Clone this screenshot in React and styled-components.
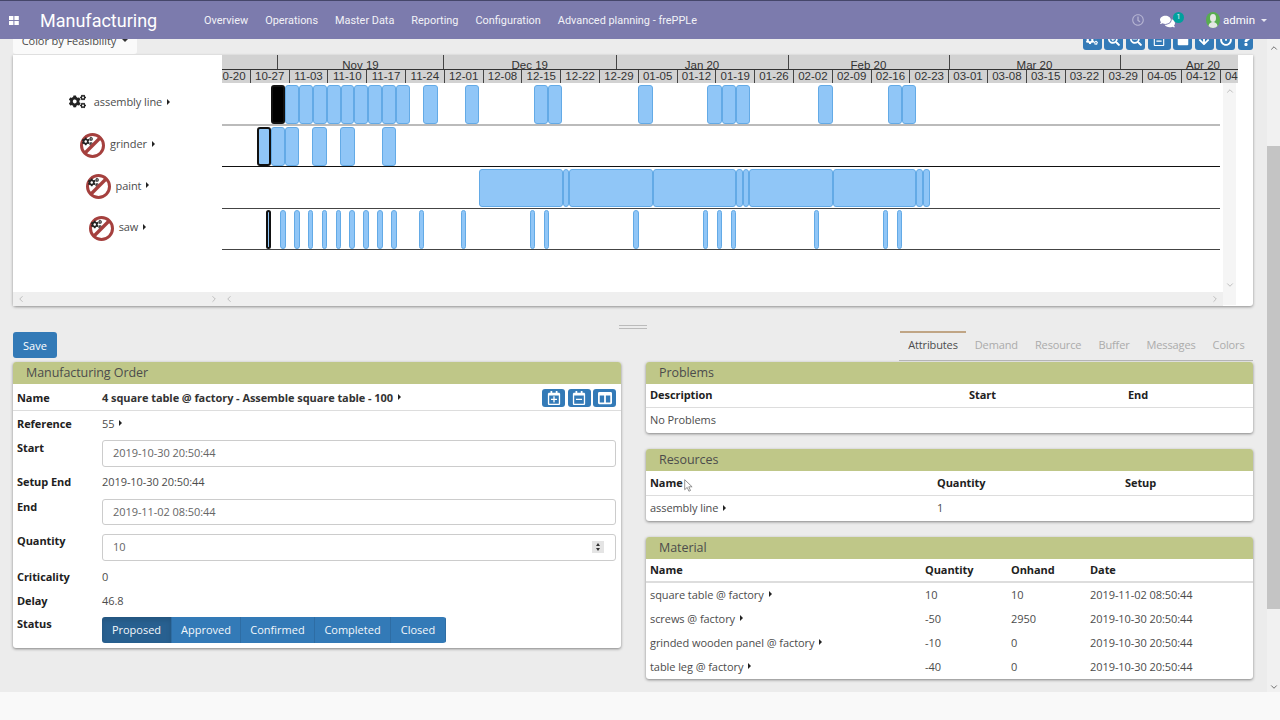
import React from 'react';
import styled, { createGlobalStyle } from 'styled-components';
import { ChevronUp, ChevronDown, ChevronLeft, ChevronRight } from 'lucide-react';
import {
  FaCogs, FaSearchPlus, FaSearchMinus, FaRegCalendarMinus, FaRegCalendarPlus, FaStop,
  FaArrowDown, FaPowerOff, FaQuestion, FaColumns, FaComments, FaRegClock,
} from 'react-icons/fa';

const GlobalStyle = createGlobalStyle`
  html, body { margin: 0; padding: 0; height: 100%; overflow: hidden; }
  body { font-family: "Open Sans", "Liberation Sans", sans-serif; font-size: 11px; letter-spacing: -0.07px; color: #4c4c4c; }
`;

const Page = styled.div`
  width: 1280px;
  height: 720px;
  display: flex;
  flex-direction: column;
  background: #f9f9f9;
`;

// top bar
const TopBar = styled.header`
  flex: 0 0 39px;
  box-sizing: border-box;
  display: flex;
  align-items: center;
  background: #7c7bad;
  border-top: 1px solid #45466a;
  color: #fff;
  font-family: Roboto, "Liberation Sans", sans-serif;
  letter-spacing: 0;
  position: relative;
  z-index: 2;
`;
const AppsIcon = styled.svg`
  width: 10px;
  height: 9px;
  margin-left: 9px;
  fill: #fff;
`;
const Title = styled.div`
  margin-left: 21px;
  font-size: 18px;
  width: 116px;
  white-space: nowrap;
`;
const Nav = styled.nav`
  display: flex;
  gap: 17px;
  margin-left: 48px;
  font-size: 10.9px;
  color: #f2f2f7;
`;
const TopRight = styled.div`
  margin-left: auto;
  display: flex;
  align-items: center;
  padding-right: 13px;
  font-size: 11.5px;
`;
const ClockIcon = styled(FaRegClock)`
  width: 12px;
  height: 12px;
  color: #b5b4d2;
  margin-right: 16px;
`;
const Chat = styled.div`
  position: relative;
  width: 46px;
  height: 16px;
  svg { width: 15px; height: 15px; color: #fff; margin-top: 2px; }
`;
const Badge = styled.span`
  position: absolute;
  left: 13px;
  top: 0;
  width: 11px;
  height: 11px;
  border-radius: 50%;
  background: #00a09d;
  font-size: 7px;
  line-height: 11px;
  text-align: center;
`;
const Avatar = styled.svg`
  width: 14px;
  height: 16px;
  margin-right: 3px;
`;
const DownCaret = styled.span`
  width: 0;
  height: 0;
  margin-left: 6px;
  border-left: 3px solid transparent;
  border-right: 3px solid transparent;
  border-top: 3px solid ${(p) => p.$color || '#e8e8f2'};
`;

// scrolled area plus page scrollbar
const Body = styled.div`
  flex: 0 0 653px;
  min-height: 0;
  display: flex;
  background: #ececec;
`;
const Content = styled.main`
  flex: 1;
  box-sizing: border-box;
  padding: 0 14px 0 13px;
  min-width: 0;
  overflow: hidden;
`;
const PageScroll = styled.div`
  flex: 0 0 13px;
  display: flex;
  flex-direction: column;
  align-items: center;
  background: #f1f1f1;
  color: #555;
  position: relative;
`;
const PageThumb = styled.div`
  position: absolute;
  left: 0;
  right: 0;
  top: 107px;
  height: 463px;
  background: #c4c4c4;
`;
const ScrollArrowTop = styled.div`
  margin-top: 2px;
  height: 10px;
`;
const ScrollArrowBottom = styled.div`
  margin-top: auto;
  height: 12px;
`;

// gantt toolbar, cut off by the top bar
const Toolbar = styled.div`
  height: 16px;
  display: flex;
  justify-content: space-between;
  align-items: flex-end;
  overflow: hidden;
`;
const ColorButton = styled.div`
  box-sizing: border-box;
  width: 124px;
  height: 28px;
  flex: none;
  display: flex;
  align-items: center;
  justify-content: center;
  background: #fafafa;
  border-radius: 0 0 3px 3px;
  color: #4c4c4c;
  margin-bottom: 1px;
  white-space: nowrap;
`;
const ToolGroup = styled.div`
  display: flex;
  gap: 2.6px;
  margin-bottom: 5px;
`;
const IconButton = styled.button`
  box-sizing: border-box;
  width: ${(p) => p.$w || 19}px;
  height: ${(p) => p.$h || 20}px;
  padding: 0;
  border: 0;
  border-radius: 3px;
  background: #337ab7;
  color: #fff;
  display: flex;
  align-items: center;
  justify-content: center;
  svg { width: ${(p) => p.$icon || 12}px; height: ${(p) => p.$icon || 12}px; }
`;

// gantt chart
const GanttPanel = styled.section`
  height: 251px;
  background: #fff;
  border-radius: 0 0 3px 3px;
  box-shadow: 0 1px 3px rgba(0, 0, 0, 0.4);
  display: flex;
  flex-direction: column;
`;
const AxisWrap = styled.div`
  margin-left: 209px;
  width: 1016px;
  height: 28px;
  overflow: hidden;
  background: #d2d2d2;
  font-family: "Liberation Sans", sans-serif;
  letter-spacing: 0;
  color: #333;
`;
const MonthRow = styled.div`
  display: flex;
  height: 14px;
  border-bottom: 1px solid #333;
`;
const MonthCell = styled.div`
  box-sizing: border-box;
  flex: none;
  height: 14px;
  text-align: center;
  line-height: 20px;
  overflow: hidden;
  border-right: 1px solid #444;
  font-size: 11.5px;
`;
const WeekRow = styled.div`
  display: flex;
  margin-left: -11px;
`;
const WeekCell = styled.div`
  box-sizing: border-box;
  flex: 0 0 38.8px;
  height: 13px;
  line-height: 13px;
  text-align: center;
  border-left: 1px solid #444;
  font-size: 11.5px;
`;
const GanttMain = styled.div`
  flex: 1;
  display: flex;
  min-height: 0;
`;
const GanttLeft = styled.div`
  width: 1210px;
  display: flex;
  flex-direction: column;
`;
const GanttRow = styled.div`
  display: flex;
  height: ${(p) => p.$h}px;
`;
const RowLabel = styled.div`
  box-sizing: border-box;
  flex: 0 0 209px;
  display: flex;
  align-items: center;
  justify-content: center;
  gap: 5px;
  padding: 0 0 6px 4px;
`;
const RowTrack = styled.div`
  width: 998px;
  position: relative;
  box-sizing: border-box;
  border-bottom: ${(p) => p.$line};
`;
const Bar = styled.div`
  position: absolute;
  top: ${(p) => p.$top}px;
  bottom: ${(p) => p.$bottom}px;
  box-sizing: border-box;
  border: ${(p) => (p.$selected ? '2px solid #111' : '1px solid #63aae6')};
  border-radius: 3px;
  background: ${(p) => (p.$black ? '#000' : '#90c6f7')};
`;
const HStrip = styled.div`
  margin-top: auto;
  height: 14px;
  display: flex;
  background: #efefef;
  color: #b5b5b5;
`;
const HPart = styled.div`
  flex: 0 0 ${(p) => p.$w}px;
  box-sizing: border-box;
  padding: 0 ${(p) => p.$pad}px;
  display: flex;
  justify-content: space-between;
  align-items: center;
`;
const VStrip = styled.div`
  width: 13px;
  margin-bottom: 1px;
  background: #f5f5f5;
  color: #b5b5b5;
  display: flex;
  flex-direction: column;
  align-items: center;
  justify-content: space-between;
  padding: 3px 0 15px;
`;
const Handle = styled.div`
  height: 26px;
  display: flex;
  justify-content: center;
  padding-top: 19px;
  box-sizing: border-box;
`;
const HandleLines = styled.div`
  width: 28px;
  height: 2px;
  border-top: 1px solid #bbb;
  border-bottom: 1px solid #bbb;
`;

// detail part
const Detail = styled.div`
  display: grid;
  grid-template-columns: 608px 607px;
  gap: 25px;
`;
const Column = styled.div`
  display: flex;
  flex-direction: column;
`;
const SaveButton = styled.button`
  width: 44px;
  height: 26px;
  margin-bottom: 4px;
  border: 0;
  border-radius: 3px;
  padding: 0;
  background: #337ab7;
  color: #fff;
  font: inherit;
`;
const Tabs = styled.div`
  display: flex;
  justify-content: flex-end;
  height: 30px;
  box-sizing: border-box;
  margin-top: -1px;
  margin-bottom: 1px;
  border-bottom: 1px solid #b8b8b8;
  margin-left: 253px;
  letter-spacing: -0.13px;
`;
const Tab = styled.div`
  box-sizing: border-box;
  padding: 0 8.5px;
  line-height: 24px;
  white-space: nowrap;
  border-top: 2px solid ${(p) => (p.$active ? '#c0a585' : 'transparent')};
  color: ${(p) => (p.$active ? '#4c4c4c' : '#ababab')};
`;
const Card = styled.section`
  background: #fff;
  border-radius: 3px;
  box-shadow: 0 1px 3px rgba(0, 0, 0, 0.45);
  margin-bottom: 16px;
`;
const CardHeader = styled.h3`
  margin: 0;
  height: 22px;
  padding-left: 13px;
  background: #bfc788;
  border-radius: 3px 3px 0 0;
  font-size: 12.5px;
  font-weight: 400;
  line-height: 22px;
  color: #4c4c4c;
`;
const FormRow = styled.div`
  box-sizing: border-box;
  height: ${(p) => p.$h}px;
  display: grid;
  grid-template-columns: 85px 1fr;
  padding: 0 5px 2px 4px;
  align-items: ${(p) => (p.$top ? 'start' : 'center')};
`;
const NameRow = styled(FormRow)`
  padding-bottom: 0;
  border-bottom: 1px solid #ddd;
`;
const Label = styled.div`
  font-weight: 700;
  color: #212121;
  ${(p) => p.$top && `padding-top: ${p.$top}px;`}
`;
const NameValue = styled.div`
  display: flex;
  align-items: center;
  font-weight: 700;
  color: #333;
  white-space: nowrap;
`;
const CardTools = styled.div`
  display: flex;
  gap: 2.5px;
  margin: 2px 0 0 auto;
`;
const Value = styled.div`
  display: flex;
  align-items: center;
`;
const Caret = styled.span`
  display: inline-block;
  width: 0;
  height: 0;
  margin-left: 5px;
  border-top: 3px solid transparent;
  border-bottom: 3px solid transparent;
  border-left: 3px solid #222;
`;
const InputBox = styled.div`
  box-sizing: border-box;
  height: ${(p) => p.$h || 27}px;
  margin-top: ${(p) => p.$mt || 3}px;
  padding: 0 10px 2px;
  display: flex;
  align-items: center;
  justify-content: space-between;
  border: 1px solid #ccc;
  border-radius: 3px;
  color: #666;
`;
const Spinner = styled.div`
  width: 12px;
  height: 12px;
  margin-right: 1px;
  background: #e4e4e4;
  display: flex;
  flex-direction: column;
  align-items: center;
  justify-content: space-evenly;
`;
const SpinUp = styled.span`
  border-left: 2.5px solid transparent;
  border-right: 2.5px solid transparent;
  border-bottom: 3px solid #333;
`;
const SpinDown = styled.span`
  border-left: 2.5px solid transparent;
  border-right: 2.5px solid transparent;
  border-top: 3px solid #333;
`;
const StatusGroup = styled.div`
  display: flex;
  width: max-content;
  margin-top: 4px;
  border-radius: 3px;
  overflow: hidden;
`;
const StatusButton = styled.button`
  height: 26px;
  width: ${(p) => p.$w}px;
  padding: 0 0 2px;
  border: 0;
  border-right: 1px solid #2e6da4;
  font: inherit;
  color: #f4f8fb;
  background: ${(p) => (p.$active ? '#286090' : '#337ab7')};
  box-shadow: ${(p) => (p.$active ? 'inset 0 3px 5px rgba(0,0,0,.125)' : 'none')};
`;
const DataRow = styled.div`
  box-sizing: border-box;
  height: ${(p) => p.$h || 24}px;
  display: grid;
  grid-template-columns: ${(p) => p.$cols};
  align-items: center;
  padding: 0 0 2px 4px;
  border-bottom: ${(p) => p.$line || '0'};
  white-space: nowrap;
`;
const HeadCell = styled.div`
  font-weight: 700;
  color: #212121;
  position: relative;
`;
const Cell = styled.div`
  display: flex;
  align-items: center;
`;
const Pointer = styled.svg`
  position: absolute;
  left: 34px;
  top: 4px;
  width: 9px;
  height: 13px;
`;

const BlockIcon = styled.svg`
  width: 25px;
  height: 25px;
  flex: none;
  margin: 3px 0 0 -4px;
`;
const GearsIcon = styled(FaCogs)`
  width: 17px;
  height: 15px;
  color: #222;
  margin-right: 3px;
`;

const Blocked = () => (
  <BlockIcon viewBox="0 0 25 25">
    <circle cx="12.5" cy="12.5" r="11" fill="#fff" stroke="#a5403e" strokeWidth="3" />
    <FaCogs x="2" y="3" width="21" height="19" color="#222" />
    <line x1="20.5" y1="4.5" x2="4.5" y2="20.5" stroke="#a5403e" strokeWidth="3.4" />
  </BlockIcon>
);

const MONTHS = [
  ['', 56], ['Nov 19', 166], ['Dec 19', 172.5], ['Jan 20', 172], ['Feb 20', 161], ['Mar 20', 171], ['Apr 20', 166],
];
const WEEKS = ['10-20', '10-27', '11-03', '11-10', '11-17', '11-24', '12-01', '12-08', '12-15', '12-22', '12-29', '01-05', '01-12', '01-19', '01-26', '02-02', '02-09', '02-16', '02-23', '03-01', '03-08', '03-15', '03-22', '03-29', '04-05', '04-12', '04-19'];

// bars are page x positions: [from, to, selected, black]
const ROWS = [
  {
    name: 'assembly line', h: 43, top: 2, bottom: 0, line: '2px solid #bbb',
    bars: [[271, 285, 1, 1], [285, 299], [299, 313], [313, 327], [327, 341], [341, 354], [354, 368], [368, 382], [382, 396], [396, 410], [423, 438], [465, 479], [534, 548], [548, 562], [638, 653], [707, 722], [722, 736], [736, 750], [818, 833], [888, 902], [902, 916]],
  },
  {
    name: 'grinder', h: 41, top: 1, bottom: 0, line: '1px solid #111', blocked: true,
    bars: [[257, 271, 1], [271, 285], [285, 299], [312, 327], [340, 355], [382, 396]],
  },
  {
    name: 'paint', h: 42, top: 2, bottom: 1, line: '1px solid #444', blocked: true,
    bars: [[479, 563], [563, 569], [569, 653], [653, 736], [736, 743], [743, 749], [749, 833], [833, 916], [916, 923], [923, 930]],
  },
  {
    name: 'saw', h: 41, top: 1, bottom: 0, line: '1px solid #444', blocked: true,
    bars: [[266, 271, 1], [280, 286], [294, 300], [308, 313], [322, 327], [336, 341], [349, 355], [363, 369], [377, 383], [391, 397], [419, 424], [461, 466], [530, 535], [544, 549], [633, 639], [703, 708], [717, 722], [731, 736], [814, 819], [883, 888], [897, 902]],
  },
];

const TOOLS = [
  [FaCogs, 19], [FaSearchPlus, 19], [FaSearchMinus, 19], [FaRegCalendarMinus, 23], [FaStop, 19], [FaArrowDown, 19], [FaPowerOff, 19], [FaQuestion, 15],
];

const STATUSES = [['Proposed', 70], ['Approved', 69], ['Confirmed', 74], ['Completed', 76], ['Closed', 55]];

const MATERIAL = [
  ['square table @ factory', '10', '10', '2019-11-02 08:50:44'],
  ['screws @ factory', '-50', '2950', '2019-10-30 20:50:44'],
  ['grinded wooden panel @ factory', '-10', '0', '2019-10-30 20:50:44'],
  ['table leg @ factory', '-40', '0', '2019-10-30 20:50:44'],
];

const App = () => (
  <Page>
    <GlobalStyle />
    <TopBar>
      <AppsIcon viewBox="0 0 10 9">
        <rect width="4.4" height="4" />
        <rect x="5.4" width="4.4" height="4" />
        <rect y="5" width="4.4" height="4" />
        <rect x="5.4" y="5" width="4.4" height="4" />
      </AppsIcon>
      <Title>Manufacturing</Title>
      <Nav>
        <span>Overview</span>
        <span>Operations</span>
        <span>Master Data</span>
        <span>Reporting</span>
        <span>Configuration</span>
        <span>Advanced planning - frePPLe</span>
      </Nav>
      <TopRight>
        <ClockIcon />
        <Chat>
          <FaComments />
          <Badge>1</Badge>
        </Chat>
        <Avatar viewBox="0 0 14 16">
          <ellipse cx="7" cy="8" rx="7" ry="8" fill="#58ad4f" />
          <ellipse cx="7" cy="6" rx="3" ry="4" fill="#e4e8e4" />
          <path d="M2.500 14c.5-3 2.500-4 4.500-4s4 1 4.500 4c-1 1.300-2.700 2-4.500 2s-3.500-.7-4.500-2z" fill="#e4e8e4" />
        </Avatar>
        <span>admin</span>
        <DownCaret />
      </TopRight>
    </TopBar>
    <Body>
      <Content>
        <Toolbar>
          <ColorButton>
            Color by Feasibility
            <DownCaret $color="#333" />
          </ColorButton>
          <ToolGroup>
            {TOOLS.map(([Icon, w], i) => (
              <IconButton key={i} $w={w}>
                <Icon />
              </IconButton>
            ))}
          </ToolGroup>
        </Toolbar>
        <GanttPanel>
          <AxisWrap>
            <MonthRow>
              {MONTHS.map(([label, w], i) => (
                <MonthCell key={i} style={{ width: w }}>{label}</MonthCell>
              ))}
            </MonthRow>
            <WeekRow>
              {WEEKS.map((w) => (
                <WeekCell key={w}>{w}</WeekCell>
              ))}
            </WeekRow>
          </AxisWrap>
          <GanttMain>
            <GanttLeft>
              {ROWS.map((row) => (
                <GanttRow key={row.name} $h={row.h}>
                  <RowLabel>
                    {row.blocked ? <Blocked /> : <GearsIcon />}
                    <Value>{row.name}<Caret /></Value>
                  </RowLabel>
                  <RowTrack $line={row.line}>
                    {row.bars.map(([from, to, selected, black]) => (
                      <Bar
                        key={from}
                        $top={row.top}
                        $bottom={row.bottom}
                        $selected={selected}
                        $black={black}
                        style={{ left: from - 222, width: to - from }}
                      />
                    ))}
                  </RowTrack>
                </GanttRow>
              ))}
              <HStrip>
                <HPart $w={209} $pad={3}>
                  <ChevronLeft size={10} />
                  <ChevronRight size={10} />
                </HPart>
                <HPart $w={1001} $pad={2}>
                  <ChevronLeft size={10} />
                  <ChevronRight size={10} style={{ marginRight: 1 }} />
                </HPart>
              </HStrip>
            </GanttLeft>
            <VStrip>
              <ChevronUp size={10} />
              <ChevronDown size={10} />
            </VStrip>
          </GanttMain>
        </GanttPanel>
        <Handle>
          <HandleLines />
        </Handle>
        <Detail>
          <Column>
            <SaveButton>Save</SaveButton>
            <Card>
              <CardHeader>Manufacturing Order</CardHeader>
              <NameRow $h={27}>
                <Label>Name</Label>
                <NameValue>
                  4 square table @ factory - Assemble square table - 100
                  <Caret />
                  <CardTools>
                    <IconButton $w={23} $h={18} $icon={14}><FaRegCalendarPlus /></IconButton>
                    <IconButton $w={23} $h={18} $icon={14}><FaRegCalendarMinus /></IconButton>
                    <IconButton $w={23} $h={18} $icon={14}><FaColumns /></IconButton>
                  </CardTools>
                </NameValue>
              </NameRow>
              <FormRow $h={26}>
                <Label>Reference</Label>
                <Value>55<Caret /></Value>
              </FormRow>
              <FormRow $h={33} $top>
                <Label $top={3}>Start</Label>
                <InputBox>2019-10-30 20:50:44</InputBox>
              </FormRow>
              <FormRow $h={25}>
                <Label>Setup End</Label>
                <Value>2019-10-30 20:50:44</Value>
              </FormRow>
              <FormRow $h={36} $top>
                <Label $top={4}>End</Label>
                <InputBox $h={26} $mt={4}>2019-11-02 08:50:44</InputBox>
              </FormRow>
              <FormRow $h={34} $top>
                <Label $top={2}>Quantity</Label>
                <InputBox>
                  10
                  <Spinner>
                    <SpinUp />
                    <SpinDown />
                  </Spinner>
                </InputBox>
              </FormRow>
              <FormRow $h={24}>
                <Label>Criticality</Label>
                <Value>0</Value>
              </FormRow>
              <FormRow $h={24}>
                <Label>Delay</Label>
                <Value>46.8</Value>
              </FormRow>
              <FormRow $h={35} $top>
                <Label $top={3}>Status</Label>
                <StatusGroup>
                  {STATUSES.map(([label, w], i) => (
                    <StatusButton key={label} $w={w} $active={i === 0}>{label}</StatusButton>
                  ))}
                </StatusGroup>
              </FormRow>
            </Card>
          </Column>
          <Column>
            <Tabs>
              <Tab $active>Attributes</Tab>
              <Tab>Demand</Tab>
              <Tab>Resource</Tab>
              <Tab>Buffer</Tab>
              <Tab>Messages</Tab>
              <Tab>Colors</Tab>
            </Tabs>
            <Card>
              <CardHeader>Problems</CardHeader>
              <DataRow $cols="319px 159px 1fr" $line="1px solid #ddd">
                <HeadCell>Description</HeadCell>
                <HeadCell>Start</HeadCell>
                <HeadCell>End</HeadCell>
              </DataRow>
              <DataRow $cols="1fr" $h={25}>
                <Cell>No Problems</Cell>
              </DataRow>
            </Card>
            <Card>
              <CardHeader>Resources</CardHeader>
              <DataRow $cols="287px 188px 1fr" $h={25} $line="1px solid #ddd">
                <HeadCell>
                  Name
                  <Pointer viewBox="0 0 9 13">
                    <path d="M.7.700v10l2.500-2.300 1.700 3.800 1.600-.7-1.700-3.700h3.300z" fill="#fff" stroke="#777" strokeWidth=".8" />
                  </Pointer>
                </HeadCell>
                <HeadCell>Quantity</HeadCell>
                <HeadCell>Setup</HeadCell>
              </DataRow>
              <DataRow $cols="287px 188px 1fr" $h={25}>
                <Cell>assembly line<Caret /></Cell>
                <Cell>1</Cell>
                <Cell />
              </DataRow>
            </Card>
            <Card>
              <CardHeader>Material</CardHeader>
              <DataRow $cols="275px 86px 79px 1fr" $line="2px solid #ddd">
                <HeadCell>Name</HeadCell>
                <HeadCell>Quantity</HeadCell>
                <HeadCell>Onhand</HeadCell>
                <HeadCell>Date</HeadCell>
              </DataRow>
              {MATERIAL.map(([name, qty, onhand, date]) => (
                <DataRow key={name} $cols="275px 86px 79px 1fr">
                  <Cell>{name}<Caret /></Cell>
                  <Cell>{qty}</Cell>
                  <Cell>{onhand}</Cell>
                  <Cell>{date}</Cell>
                </DataRow>
              ))}
            </Card>
          </Column>
        </Detail>
      </Content>
      <PageScroll>
        <ScrollArrowTop><ChevronUp size={10} /></ScrollArrowTop>
        <PageThumb />
        <ScrollArrowBottom><ChevronDown size={10} /></ScrollArrowBottom>
      </PageScroll>
    </Body>
  </Page>
);

export default App;
